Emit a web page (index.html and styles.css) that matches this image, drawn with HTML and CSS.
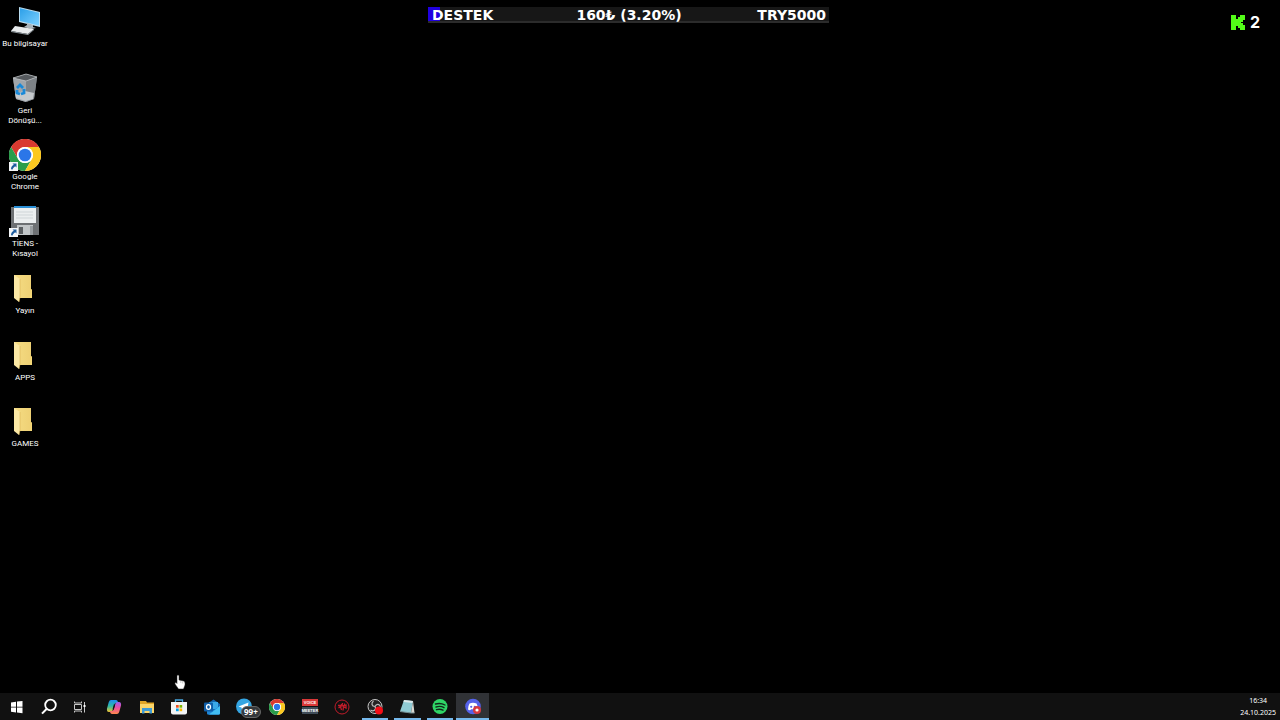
FILE: index.html
```html
<!DOCTYPE html>
<html lang="tr">

<head>
    <meta charset="utf-8">
    <title>Masaüstü</title>
    <meta name="viewport" content="width=device-width, initial-scale=1">
    <link rel="stylesheet" href="styles.css">
</head>

<body>
    <!-- shared shapes -->
    <svg class="defs" width="0" height="0">
        <defs>
            <linearGradient id="screen" x1="0" y1="0" x2="1" y2="1">
                <stop offset="0" stop-color="#2c9fe8" />
                <stop offset="1" stop-color="#7bd0ff" />
            </linearGradient>
            <linearGradient id="sheet" x1="0" y1="0" x2="1" y2="0">
                <stop offset="0" stop-color="#f5dc83" />
                <stop offset="1" stop-color="#eed074" />
            </linearGradient>
            <linearGradient id="copilotA" x1="0" y1="0" x2="0" y2="1">
                <stop offset="0" stop-color="#1d8df0" />
                <stop offset=".5" stop-color="#2cb9a8" />
                <stop offset="1" stop-color="#f0c62c" />
            </linearGradient>
            <linearGradient id="copilotB" x1="0" y1="0" x2="0" y2="1">
                <stop offset="0" stop-color="#9b5cf0" />
                <stop offset=".5" stop-color="#ee4f9c" />
                <stop offset="1" stop-color="#ff8a4c" />
            </linearGradient>
        </defs>
        <symbol id="chrome" viewBox="0 0 32 32">
            <circle cx="16" cy="16" r="16" fill="#fff" />
            <path d="M2.100 8A16 16 0 0 1 29.900 8H16a8 8 0 0 0-6.900 12z" fill="#d93a30" />
            <path d="M2.100 8A16 16 0 0 0 16 32L22.900 20A8 8 0 0 1 9.100 20z" fill="#2a9d4a" />
            <path d="M29.900 8A16 16 0 0 1 16 32L22.900 20A8 8 0 0 0 16 8z" fill="#fbc820" />
            <circle cx="16" cy="16" r="8" fill="#fff" />
            <circle cx="16" cy="16" r="6.300" fill="#2b76e8" />
        </symbol>
        <symbol id="folder" viewBox="0 0 20 28">
            <path d="M0 0H17V14L18 15V23H0z" fill="url(#sheet)" />
            <path d="M17 14l1 1v8h-2z" fill="#f4d777" />
            <path d="M0 0L6 4V22L5 27L0 23z" fill="#fbe8a4" />
            <path d="M6 4V22L5 27" fill="none" stroke="#d9b454" stroke-width=".6" />
        </symbol>
        <symbol id="shortcut" viewBox="0 0 9 9">
            <path d="M0 0h9v9H0z" fill="#f4f6f8" />
            <path d="M3.500 1.500H7.500V5.500L6.200 4.200C4.800 5 4 6 3.600 7.500L2 7.200C2 5.200 3 3.900 4.800 2.800z" fill="#1d5c9e" />
        </symbol>
    </svg>

    <main class="desktop">
        <nav class="shortcuts">
            <a href="#" class="shortcut">
                <svg width="32" height="32" viewBox="0 0 32 32">
                    <path d="M10 1L31 6V21L10 16z" fill="#b9dcf0" />
                    <path d="M11 2.300L30 6.800V19.600L11 15z" fill="url(#screen)" />
                    <path d="M18 17l3 1 3 1v2l3 1-5 1-7-2 3-2z" fill="#aab4bb" />
                    <path d="M6 20L25 23L19 28L2 25z" fill="#e8ebed" />
                    <path d="M2 25l17 3 6-5v1l-6 5-17-3z" fill="#8d969c" />
                </svg>
                <span>Bu bilgisayar</span>
            </a>
            <a href="#" class="shortcut">
                <svg width="32" height="32" viewBox="0 0 32 32">
                    <path d="M4 5L17 1L28 4L25 26L17 29L7 26z" fill="#90959a" />
                    <path d="M4 5L17 1L28 4L17 8z" fill="#55595d" />
                    <path d="M4 5L17 8V29L7 26z" fill="#a0a5aa" />
                    <path d="M17 8L28 4L25 26L17 29z" fill="#7d8287" />
                    <path d="M6 20l10-2 9 2-1 6-7 2-10-3z" fill="#c5c9cc" />
                    <path d="M4 5L17 1L28 4L17 8z" fill="none" stroke="#c2c5c7" stroke-width=".7" />
                    <path d="M8 15l3-3 3 3M15 16l0 4-3 1M11 21l-3-1v-3" fill="none" stroke="#1989d8" stroke-width="2.800" />
                </svg>
                <span>Geri Dönüşü...</span>
            </a>
            <a href="#" class="shortcut">
                <svg width="32" height="32" viewBox="0 0 32 32">
                    <use href="#chrome" />
                    <use href="#shortcut" x="0" y="23" width="9" height="9" />
                </svg>
                <span>Google Chrome</span>
            </a>
            <a href="#" class="shortcut">
                <svg width="32" height="32" viewBox="0 0 32 32">
                    <path d="M2 1H30V29H2z" fill="#6d7073" />
                    <path d="M5 1H27V17H5z" fill="#eceff0" />
                    <path d="M5 0H27V2H5z" fill="#2b8fd6" />
                    <path d="M7 6h17M7 9h17M7 12h17" stroke="#cfd5d8" />
                    <path d="M8 19H24V29H8z" fill="#c2c6c8" />
                    <path d="M10 21h4v7h-4z" fill="#5b5f62" />
                    <path d="M21 20h3v9h-3z" fill="#999ea1" />
                    <use href="#shortcut" x="0" y="22" width="9" height="9" />
                </svg>
                <span>TİENS - Kısayol</span>
            </a>
            <a href="#" class="shortcut">
                <svg width="32" height="32" viewBox="0 0 32 32"><use href="#folder" x="5" y="2" width="20" height="28" /></svg>
                <span>Yayın</span>
            </a>
            <a href="#" class="shortcut">
                <svg width="32" height="32" viewBox="0 0 32 32"><use href="#folder" x="5" y="2" width="20" height="28" /></svg>
                <span>APPS</span>
            </a>
            <a href="#" class="shortcut">
                <svg width="32" height="32" viewBox="0 0 32 32"><use href="#folder" x="5" y="2" width="20" height="28" /></svg>
                <span>GAMES</span>
            </a>
        </nav>

        <!-- donation goal -->
        <div class="goal">
            <span>DESTEK</span>
            <span>160₺ (3.20%)</span>
            <span class="goal_total">TRY5000</span>
        </div>

        <!-- viewer count -->
        <div class="viewers">
            <svg width="14" height="15" viewBox="0 0 14 15">
                <path d="M0 0H5V4H7V2H9V0H14V5H12V7H10V8H12V10H14V15H9V13H7V11H5V15H0z" fill="#53fc18" />
            </svg>
            <span>2</span>
        </div>
    </main>

    <svg class="cursor" width="12" height="16" viewBox="0 0 12 16">
        <path d="M3 1.500Q4 .3 5 1.500V6L9.500 7Q11 7.500 11 9V11L9.500 15H4.500L1 10Q.5 8.300 2 8.500L3 9.500z" fill="#fff" stroke="#222" stroke-width=".5" />
        <path d="M6.800 7v2M8.700 7.500v2" stroke="#999" stroke-width=".5" />
    </svg>

    <footer class="taskbar">
        <div class="apps">
            <button type="button" class="app" aria-label="Başlat">
                <svg width="18" height="18" viewBox="0 0 18 18">
                    <path d="M4 4.500l5-.7V8.700H4zM10 3.600L15.500 3V8.700H10zM4 9.600H9V14.500L4 13.800zM10 9.600H15.500V15.300L10 14.600z" fill="#fff" />
                </svg>
            </button>
            <button type="button" class="app" aria-label="Ara">
                <svg width="18" height="18" viewBox="0 0 18 18">
                    <circle cx="10.500" cy="7" r="5.300" fill="none" stroke="#fff" stroke-width="1.800" />
                    <path d="M6.800 10.800L2 15.600" stroke="#fff" stroke-width="2" />
                </svg>
            </button>
            <button type="button" class="app" aria-label="Görev görünümü">
                <svg width="18" height="18" viewBox="0 0 18 18" fill="none" stroke="#c8c8c8">
                    <path d="M2.500 3.500V5H9.500V3.500M2.500 6.500H9.500V11.500H2.500zM2.500 14.500V13H9.500V14.500M12.500 4V14.500" />
                    <path d="M11.500 7h2v2h-2z" fill="#fff" stroke="none" />
                </svg>
            </button>
            <button type="button" class="app" aria-label="Copilot">
                <svg width="18" height="18" viewBox="0 0 18 18">
                    <path d="M6 2H11Q12.500 2 13 4L13.500 5H11Q9.700 5 9.200 7L7.500 12.500Q7 14 5.500 14H4Q1.500 14 2 10.500L3.800 4Q4.500 2 6 2z" fill="url(#copilotA)" />
                    <path d="M12 16H7Q5.500 16 5 14L4.500 13H7Q8.300 13 8.800 11L10.500 5.500Q11 4 12.500 4H14Q16.500 4 16 7.500L14.200 14Q13.500 16 12 16z" fill="url(#copilotB)" />
                    <path d="M9.500 6.500l-1.300 5" stroke="#161616" stroke-width="1.300" />
                </svg>
            </button>
            <button type="button" class="app" aria-label="Dosya Gezgini">
                <svg width="18" height="18" viewBox="0 0 18 18">
                    <path d="M2 3H8L9 4.500H16V8H2z" fill="#e0a526" />
                    <path d="M2 6H16V15H2z" fill="#fbd569" />
                    <path d="M4 10H14V15.500H11.500V13H6.500V15.500H4z" fill="#3f9bd4" />
                </svg>
            </button>
            <button type="button" class="app" aria-label="Microsoft Store">
                <svg width="18" height="18" viewBox="0 0 18 18">
                    <path d="M5.500 5V2H12.500V5" fill="none" stroke="#48a8e0" stroke-width="1.300" />
                    <path d="M1 4H17V14.500Q17 16.500 15 16.500H3Q1 16.500 1 14.500z" fill="#f2f4f6" />
                    <path d="M6 7h2.700v2.700H6z" fill="#f05022" />
                    <path d="M9.500 7h2.700v2.700H9.500z" fill="#7eb900" />
                    <path d="M6 10.500h2.700v2.700H6z" fill="#00a3ee" />
                    <path d="M9.500 10.500h2.700v2.700H9.500z" fill="#feb800" />
                </svg>
            </button>
            <button type="button" class="app" aria-label="Outlook">
                <svg width="18" height="18" viewBox="0 0 18 18">
                    <path d="M4 6L10.500 1.500L17 6V15Q17 16.500 15.500 16.500H5.500Q4 16.500 4 15z" fill="#1567ae" />
                    <path d="M6 4H15V11H6z" fill="#3aa9e8" />
                    <path d="M4 9L10 12.500L17 8V15Q17 16.500 15.500 16.500H5.500Q4 16.500 4 15z" fill="#1e86d5" />
                    <path d="M17 8V15Q17 16.500 15.500 16.500H6z" fill="#42bdf2" />
                    <rect x="1" y="4.500" width="9" height="9" rx="1" fill="#0f5ea8" />
                    <ellipse cx="5.500" cy="9" rx="2" ry="2.300" fill="none" stroke="#fff" stroke-width="1.300" />
                </svg>
            </button>
            <button type="button" class="app" aria-label="Telegram">
                <svg width="18" height="18" viewBox="0 0 18 18">
                    <circle cx="9" cy="8.500" r="8" fill="#35a6e3" />
                    <path d="M3.500 8.500L13.500 4.500L12 12.500L8.500 10L7 11.500L6.500 9.500z" fill="#fff" />
                </svg>
                <span class="badge">99+</span>
            </button>
            <button type="button" class="app" aria-label="Google Chrome">
                <svg width="18" height="18" viewBox="0 0 18 18"><use href="#chrome" x="1" y="1" width="16" height="16" /></svg>
            </button>
            <button type="button" class="app" aria-label="Voicemeeter">
                <svg width="18" height="18" viewBox="0 0 18 18" class="voice">
                    <path d="M1 1H17V8H1z" fill="#d93838" />
                    <path d="M1 9H17V16H1z" fill="#3f4c58" />
                    <text x="9" y="6">VOICE</text>
                    <text x="9" y="14">MEETER</text>
                </svg>
            </button>
            <button type="button" class="app" aria-label="Oyun">
                <svg width="18" height="18" viewBox="0 0 18 18" fill="none" stroke="#c01c2a">
                    <circle cx="9" cy="9" r="7" stroke-width="1" />
                    <path d="M5 7.500H8.500V6M5.500 10l2-1.500 1 3.500M9.500 5l-.5 3 4-1v3l-2.500-1.500L10 12.500M11.500 5.500v2" stroke-width="1.300" />
                </svg>
            </button>
            <button type="button" class="app running" aria-label="OBS Studio">
                <svg width="18" height="18" viewBox="0 0 18 18">
                    <circle cx="9" cy="8.500" r="7" fill="#242424" stroke="#c6c6c6" />
                    <path d="M9 8.500C5.500 8.500 5 5 7.500 3M9 8.500C10.500 5 14 6 14.500 9M9 8.500C11 12 7 14 4.500 12" fill="none" stroke="#bbb" stroke-width="1.200" />
                    <circle cx="13" cy="12.500" r="4" fill="#f40d16" />
                </svg>
            </button>
            <button type="button" class="app running" aria-label="Not Defteri">
                <svg width="18" height="18" viewBox="0 0 18 18">
                    <path d="M6 2L15 3L13 15L2 13.500z" fill="#8fcbd4" />
                    <path d="M6 2L15 3L14.500 5L5.500 4z" fill="#dce8ea" />
                    <path d="M15 3L16.500 15L13 15z" fill="#d8d8d2" />
                    <path d="M2 13.500L13 15H16.500" fill="none" stroke="#718b91" />
                </svg>
            </button>
            <button type="button" class="app running" aria-label="Spotify">
                <svg width="18" height="18" viewBox="0 0 18 18">
                    <circle cx="9" cy="8.500" r="7.500" fill="#2fd566" />
                    <path d="M4.500 6Q9.500 4.500 14 7M5 9Q9.500 7.500 13 9.700M5.500 11.700Q9 10.500 12 12.200" fill="none" stroke="#10291a" stroke-width="1.400" stroke-linecap="round" />
                </svg>
            </button>
            <button type="button" class="app running active" aria-label="Discord">
                <svg width="18" height="18" viewBox="0 0 18 18">
                    <circle cx="9" cy="8.500" r="7.800" fill="#5562ea" />
                    <path d="M5.500 5.500Q9 4 12.500 5.500Q14 8 14 11.500Q12.500 12.500 11.500 12L11 11.300H7L6.500 12Q5.500 12.500 4 11.500Q4 8 5.500 5.500z" fill="#fff" />
                    <circle cx="7.200" cy="8.800" r="1.100" fill="#5562ea" />
                    <circle cx="10.800" cy="8.800" r="1.100" fill="#5562ea" />
                    <circle cx="13" cy="12" r="4" fill="#d7393f" />
                    <circle cx="13" cy="12" r="1.600" fill="#fff" />
                </svg>
            </button>
        </div>
        <div class="clock">
            <time>16:34</time>
            <time>24.10.2025</time>
        </div>
    </footer>
</body>

</html>
```
FILE: styles.css
```css
* {
    margin: 0;
    padding: 0;
    box-sizing: border-box;
}

body {
    display: flex;
    flex-direction: column;
    min-height: 100vh;
    background-color: #000;
    color: #fff;
    font-family: "Noto Sans", "Open Sans", sans-serif;
    font-size: 7px;
}

svg {
    display: block;
    flex-shrink: 0;
}

.defs {
    position: absolute;
}

.desktop {
    flex: 1;
    display: grid;
    grid-template-columns: 50px 1fr 73px;
    align-items: start;
}

.shortcuts {
    display: grid;
    grid-template-rows: repeat(7, 1fr);
    height: 469px;
    padding-top: 2px;
}

.shortcut {
    display: flex;
    flex-direction: column;
    align-items: center;
    padding-top: 4px;
    gap: 1px;
    color: #fff;
    font-family: Roboto, sans-serif;
    font-size: 8px;
    text-align: center;
    text-decoration: none;
    line-height: 10px;
}

.shortcut span {
    max-width: 48px;
}

.goal {
    justify-self: center;
    display: grid;
    grid-template-columns: 1fr auto 1fr;
    width: 401px;
    height: 16px;
    margin-top: 7px;
    padding: 0 3px 0 4px;
    border-bottom: 2px solid #2b2b2b;
    background: linear-gradient(to right, #2000e0 3%, #171717 3%);
    font-family: "DejaVu Sans", sans-serif;
    font-size: 14px;
    font-weight: bold;
    line-height: 16px;
}

.goal_total {
    text-align: right;
}

.viewers {
    display: flex;
    align-items: center;
    gap: 5px;
    margin-top: 12px;
    padding-left: 24px;
    font-family: Inter, sans-serif;
    font-size: 16px;
    font-weight: bold;
    line-height: 20px;
}

/* pointer lies over the desktop */
.cursor {
    position: absolute;
    left: 174px;
    bottom: 30px;
}

.taskbar {
    display: flex;
    justify-content: space-between;
    height: 27px;
    background-color: #111;
}

.apps {
    display: flex;
    width: 489px;
}

.app {
    position: relative;
    flex: 1;
    display: flex;
    align-items: center;
    justify-content: center;
    border: none;
    background: none;
    color: #fff;
    font-family: inherit;
}

.app:hover,
.active {
    background-color: #303236;
}

/* line under an open window */
.running::after {
    content: "";
    position: absolute;
    left: 3px;
    right: 3px;
    bottom: 0;
    height: 2px;
    background-color: #76b9ed;
}

.active::after {
    left: 0;
    right: 0;
}

.badge {
    position: absolute;
    right: 0;
    bottom: 2px;
    padding: 0 2px;
    border: 1px solid #666;
    border-radius: 6px;
    background-color: #34383c;
    font-size: 8px;
    font-weight: bold;
    line-height: 10px;
}

.voice text {
    fill: #fff;
    font-family: "Liberation Sans", sans-serif;
    font-size: 4px;
    font-weight: bold;
    text-anchor: middle;
}

.clock {
    display: flex;
    flex-direction: column;
    align-items: center;
    justify-content: center;
    padding-right: 4px;
    line-height: 12px;
}
```
